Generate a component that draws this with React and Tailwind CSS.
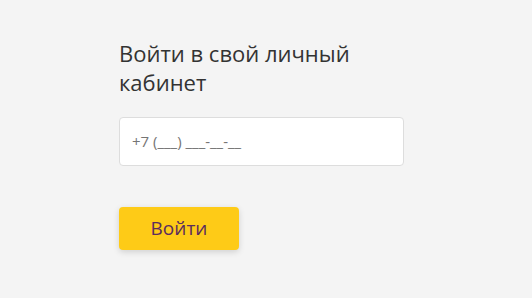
export default function App() {
  return (
    <div className="w-[532px] h-[298px] bg-[#f4f4f4] overflow-hidden" style={{ fontFamily: "'Open Sans', sans-serif" }}>
      <div className="pl-[119px] pt-[39px] w-[420px] flex flex-col">
        <h1 className="text-[22px] leading-[29px] text-[#333333] font-normal w-[285px]">Войти в свой личный кабинет</h1>
        <div className="mt-[20px] h-[49px] w-[285px] bg-white border border-[#dddddd] rounded-[4px] flex items-center px-[12px]">
          <span className="text-[15px] text-[#757575]">+7 (___) ___-__-__</span>
        </div>
        <button className="mt-[41px] w-[120px] h-[43px] bg-[#fecb17] rounded-[4px] shadow-[0_2px_6px_rgba(0,0,0,0.15)] text-[19px] text-[#5b2d5e]">Войти</button>
      </div>
    </div>
  );
}
